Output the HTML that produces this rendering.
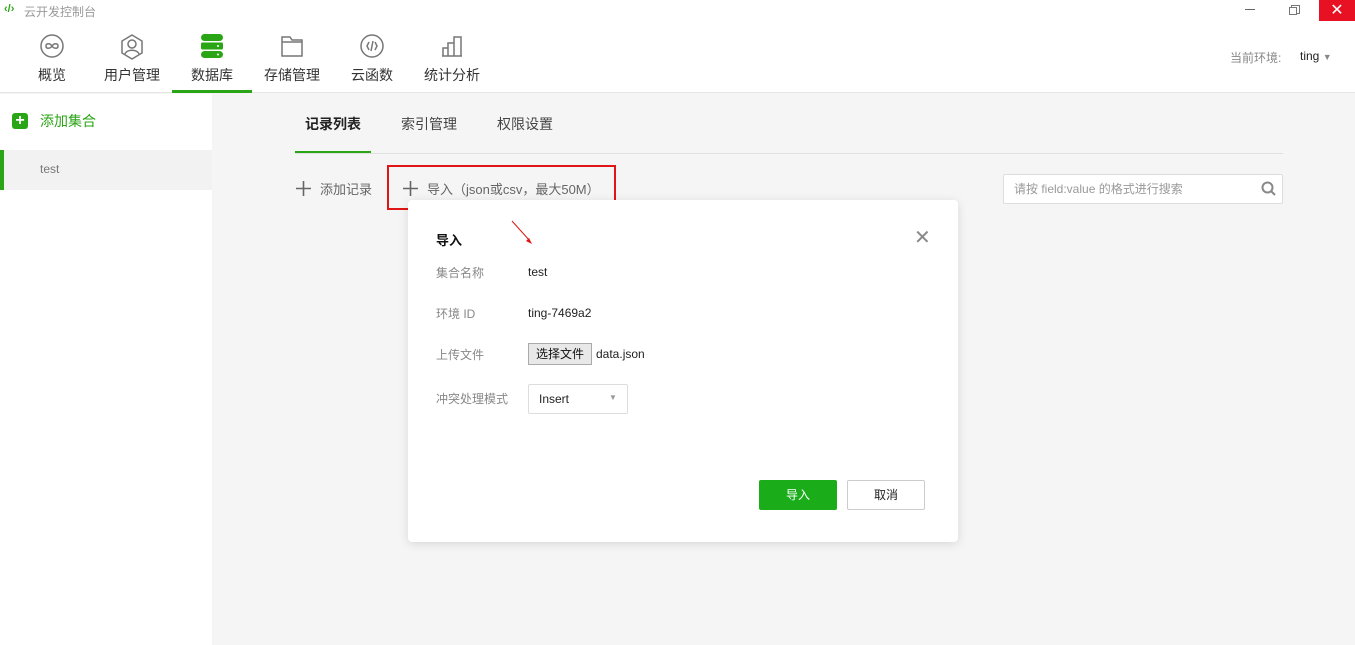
<!DOCTYPE html>
<html><head><meta charset="utf-8"><style>
*{margin:0;padding:0;box-sizing:border-box}
body{width:1355px;height:645px;position:relative;overflow:hidden;background:#f5f5f5;font-family:"Liberation Sans","Noto Sans CJK SC",sans-serif;font-size:13px;color:#333}
.a{position:absolute;white-space:nowrap}
.top{position:absolute;left:0;top:0;width:1355px;height:93px;background:#fff;border-bottom:1px solid #e5e5e5}
.nav{position:absolute;top:65px;font-size:14px;color:#333;text-align:center}
.ic{position:absolute;top:34px}
.side{position:absolute;left:0;top:94px;width:212px;height:551px;background:#fff}
.lab{color:#888;font-size:12px}
.val{color:#222;font-size:12px}
</style></head><body>
<div class="top"></div>
<div class="a" style="left:4px;top:3px;color:#2aa515;font-size:11px;font-weight:bold">‹/›</div>
<div class="a" style="left:24px;top:3px;color:#999;font-size:12px">云开发控制台</div>
<div class="a" style="left:1245px;top:9px;width:10px;height:1px;background:#666"></div>
<div class="a" style="left:1291px;top:5px;width:9px;height:9px;border:1px solid #777;background:#fff"></div>
<div class="a" style="left:1289px;top:7px;width:8px;height:8px;border:1px solid #777;background:#fff"></div>
<div class="a" style="left:1319px;top:0;width:36px;height:21px;background:#e81123;color:#fff;text-align:center;font-size:16px;line-height:21px">✕</div>
<div class="a" style="left:1230px;top:49px;color:#888;font-size:12px">当前环境:</div>
<div class="a" style="left:1300px;top:49px;color:#222;font-size:12px">ting <span style="color:#888;font-size:9px">▼</span></div>

<svg class="ic" style="left:40px" width="24" height="24" viewBox="0 0 24 24" fill="none" stroke="#777" stroke-width="1.5"><circle cx="12" cy="12" r="11"/><path d="M12 12c-2-3-6-3-6 0s4 3 6 0c2-3 6-3 6 0s-4 3-6 0"/></svg>
<svg class="ic" style="left:120px" width="24" height="26" viewBox="0 0 24 26" fill="none" stroke="#777" stroke-width="1.5"><path d="M12 1l10 6v12l-10 6-10-6V7z"/><circle cx="12" cy="10" r="4"/><path d="M5 20c2-5 12-5 14 0"/></svg>
<svg class="ic" style="left:201px" width="22" height="24" viewBox="0 0 22 24"><rect x="0" y="0" width="22" height="7" rx="3.5" fill="#2aa515"/><rect x="0" y="8.5" width="22" height="7" rx="1.5" fill="#2aa515"/><rect x="0" y="17" width="22" height="7" rx="3.5" fill="#2aa515"/><circle cx="17" cy="12" r="1" fill="#fff"/><circle cx="17" cy="20.5" r="1" fill="#fff"/></svg>
<svg class="ic" style="left:281px;top:36px" width="22" height="21" viewBox="0 0 22 21" fill="none" stroke="#777" stroke-width="1.5"><path d="M1 1h8l2 3h10v16H1z"/><path d="M1 6h20"/></svg>
<svg class="ic" style="left:360px" width="24" height="24" viewBox="0 0 24 24" fill="none" stroke="#777" stroke-width="1.5"><circle cx="12" cy="12" r="11"/><path d="M9 8l-2 4 2 4M15 8l2 4-2 4M13 7l-2 10"/></svg>
<svg class="ic" style="left:441px;top:36px" width="22" height="21" viewBox="0 0 22 21" fill="none" stroke="#777" stroke-width="1.5"><path d="M1 20h20M2 20v-8h5v8M7 20V7h6v13M13 20V1h7v19"/></svg>
<div class="nav" style="left:38px">概览</div>
<div class="nav" style="left:104px">用户管理</div>
<div class="nav" style="left:191px">数据库</div>
<div class="nav" style="left:264px">存储管理</div>
<div class="nav" style="left:351px">云函数</div>
<div class="nav" style="left:424px">统计分析</div>
<div class="a" style="left:172px;top:90px;width:80px;height:3px;background:#2aa515"></div>

<div class="side"></div>
<div class="a" style="left:12px;top:113px;width:16px;height:16px;border-radius:3px;background:#2aa515;color:#fff;text-align:center;font-size:16px;line-height:15px;font-weight:bold">+</div>
<div class="a" style="left:40px;top:111px;color:#2aa515;font-size:14px">添加集合</div>
<div class="a" style="left:0;top:150px;width:212px;height:40px;background:#f2f2f2;border-left:4px solid #2aa515"></div>
<div class="a" style="left:40px;top:162px;color:#777;font-size:12px">test</div>

<div class="a" style="left:305px;top:114px;font-size:14px;font-weight:bold;color:#222">记录列表</div>
<div class="a" style="left:401px;top:114px;font-size:14px;color:#444">索引管理</div>
<div class="a" style="left:497px;top:114px;font-size:14px;color:#444">权限设置</div>
<div class="a" style="left:295px;top:153px;width:988px;height:1px;background:#e0e0e0"></div>
<div class="a" style="left:295px;top:151px;width:76px;height:2px;background:#2aa515"></div>

<svg class="a" style="left:296px;top:181px" width="15" height="15" stroke="#666" stroke-width="1.6"><path d="M7.5 0v15M0 7.5h15"/></svg>
<div class="a" style="left:320px;top:179px;color:#666;font-size:13px">添加记录</div>
<div class="a" style="left:387px;top:165px;width:229px;height:45px;border:2px solid #e01515"></div>
<svg class="a" style="left:403px;top:181px" width="15" height="15" stroke="#666" stroke-width="1.6"><path d="M7.5 0v15M0 7.5h15"/></svg>
<div class="a" style="left:427px;top:179px;color:#666;font-size:13px">导入（json或csv，最大50M）</div>

<div class="a" style="left:1003px;top:174px;width:280px;height:30px;background:#fff;border:1px solid #ddd;border-radius:2px"></div>
<div class="a" style="left:1014px;top:180px;color:#999;font-size:12px">请按 field:value 的格式进行搜索</div>
<svg class="a" style="left:1261px;top:181px" width="15" height="15" viewBox="0 0 15 15" fill="none" stroke="#888" stroke-width="2"><circle cx="6.5" cy="6.5" r="5"/><path d="M10 10l4 4"/></svg>

<div class="a" style="left:408px;top:200px;width:550px;height:342px;background:#fff;border-radius:4px;box-shadow:0 2px 10px rgba(0,0,0,.12)"></div>
<div class="a" style="left:436px;top:230px;font-size:13px;font-weight:bold;color:#111">导入</div>
<div class="a" style="left:914px;top:225px;font-size:20px;color:#888">✕</div>
<svg class="a" style="left:510px;top:220px" width="25" height="26"><path d="M2 1L20 21" stroke="#e01515" stroke-width="1"/><path d="M22 24l-6-3 3-3z" fill="#e01515"/></svg>
<div class="a lab" style="left:436px;top:264px">集合名称</div><div class="a val" style="left:528px;top:265px">test</div>
<div class="a lab" style="left:436px;top:305px">环境 ID</div><div class="a val" style="left:528px;top:306px">ting-7469a2</div>
<div class="a lab" style="left:436px;top:346px">上传文件</div>
<div class="a" style="left:528px;top:343px;width:64px;height:22px;border:1px solid #aaa;background:#e8e8e8;font-size:12px;text-align:center;line-height:20px;color:#111">选择文件</div>
<div class="a val" style="left:596px;top:347px">data.json</div>
<div class="a lab" style="left:436px;top:390px">冲突处理模式</div>
<div class="a" style="left:528px;top:384px;width:100px;height:30px;border:1px solid #ddd;border-radius:2px"></div>
<div class="a val" style="left:539px;top:392px">Insert</div>
<div class="a" style="left:609px;top:393px;font-size:8px;color:#999">▼</div>
<div class="a" style="left:759px;top:480px;width:78px;height:30px;background:#1aad19;border-radius:2px;color:#fff;text-align:center;line-height:30px;font-size:12px">导入</div>
<div class="a" style="left:847px;top:480px;width:78px;height:30px;border:1px solid #ccc;border-radius:2px;color:#222;text-align:center;line-height:28px;font-size:12px">取消</div>
</body></html>
